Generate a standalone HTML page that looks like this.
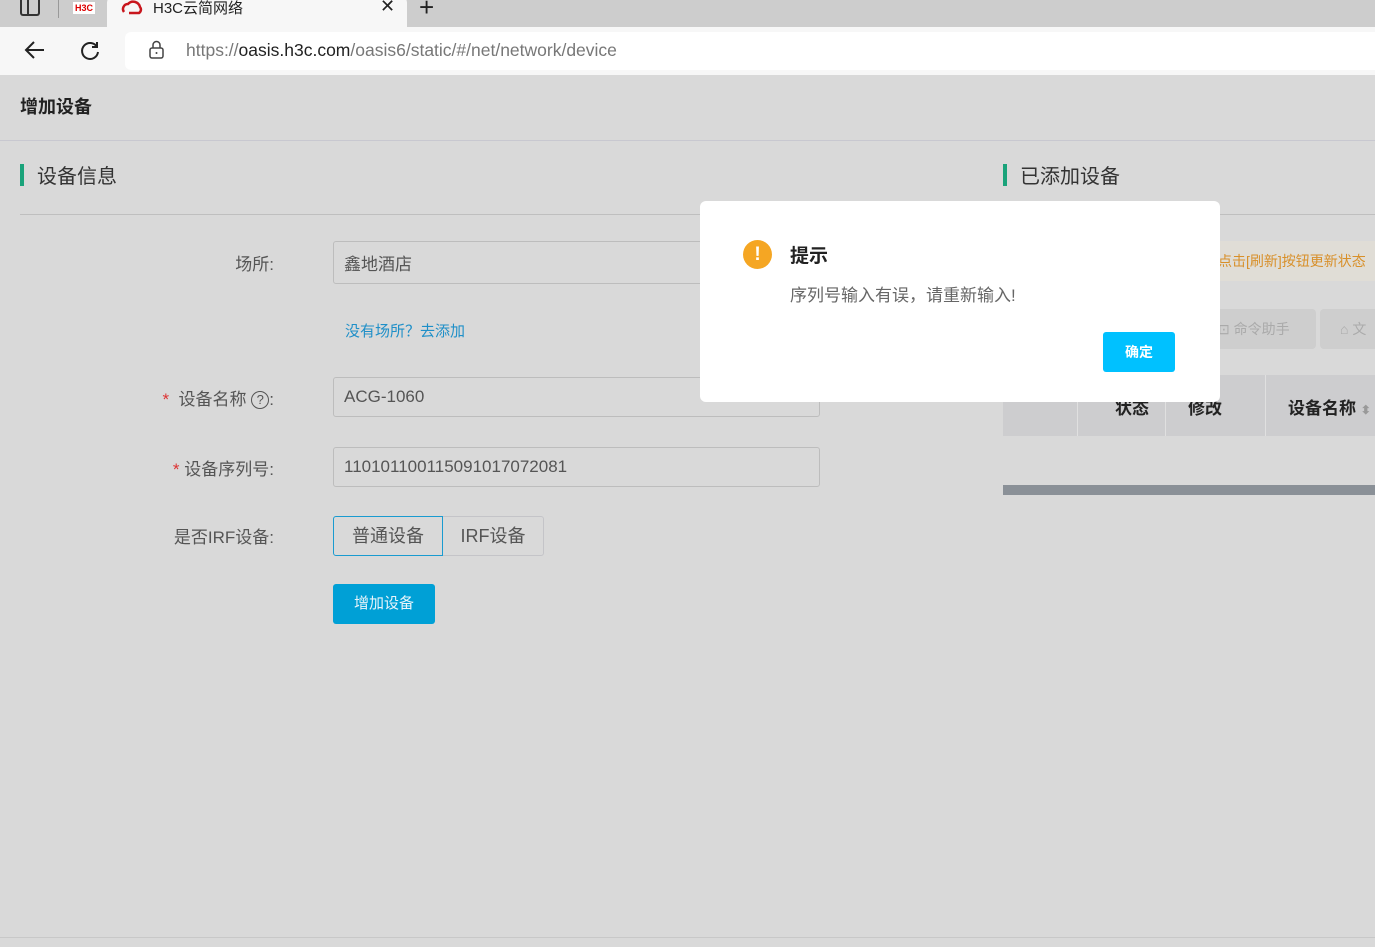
<!DOCTYPE html>
<html><head><meta charset="utf-8"><style>
*{box-sizing:border-box;margin:0;padding:0}
body{width:1375px;height:947px;overflow:hidden;background:#d9d9d9;font-family:"Liberation Sans","Noto Sans CJK SC",sans-serif;position:relative;color:#555}
.a{position:absolute}
.tabbar{left:0;top:0;width:1375px;height:27px;background:#cdcdcd}
.tab{left:107px;top:-5px;width:300px;height:32px;background:#f7f7f7;border-radius:8px 8px 0 0}
.addr{left:0;top:27px;width:1375px;height:48px;background:#f7f7f7}
.url{left:125px;top:32px;width:1260px;height:38px;background:#fff;border-radius:6px}
.inp{border:1px solid #bdbdbd;border-radius:3px;background:#d9d9d9;font-size:17px;color:#555;padding-left:10px;display:flex;align-items:center}
.lbl{font-size:17px;color:#555;text-align:right;width:200px}
</style></head><body>
<div class="a tabbar"></div>
<div class="a tab"></div>
<div class="a" style="left:20px;top:0;width:20px;height:16px;border:2px solid #333;border-top:none;border-radius:0 0 3px 3px"></div>
<div class="a" style="left:27px;top:0;width:2px;height:14px;background:#333"></div>
<div class="a" style="left:58px;top:0;width:1px;height:18px;background:#999"></div>
<div class="a" style="left:73px;top:2px;width:22px;height:12px;background:#fff;color:#d00;font-size:9px;font-weight:bold;line-height:12px;text-align:center">H3C</div>
<svg class="a" style="left:120px;top:0" width="24" height="16"><path d="M4 12 A5 5 0 0 1 8 4 A7 7 0 0 1 20 7 A4 4 0 0 1 19 13 H9" fill="none" stroke="#c8161d" stroke-width="2.5"/></svg>
<div class="a" style="left:153px;top:-3px;font-size:15px;color:#222">H3C云简网络</div>
<div class="a" style="left:380px;top:-4px;font-size:18px;color:#222">✕</div>
<div class="a" style="left:419px;top:-8px;font-size:26px;color:#222;font-weight:300">+</div>
<div class="a addr"></div>
<div class="a url"></div>
<svg class="a" style="left:22px;top:39px" width="26" height="22"><path d="M22 11H4M12 3 4 11l8 8" fill="none" stroke="#222" stroke-width="2"/></svg>
<svg class="a" style="left:78px;top:39px" width="24" height="24"><path d="M19 8A8 8 0 1 0 20 13M19 3v5h-5" fill="none" stroke="#222" stroke-width="2"/></svg>
<svg class="a" style="left:148px;top:40px" width="18" height="20"><rect x="2" y="8" width="13" height="10" rx="2" fill="none" stroke="#444" stroke-width="1.5"/><path d="M5 8V5a3.5 3.5 0 0 1 7 0v3" fill="none" stroke="#444" stroke-width="1.5"/><circle cx="8.5" cy="13" r="1" fill="#444"/></svg>
<div class="a" style="left:186px;top:40px;font-size:17.5px;color:#777">https://<span style="color:#222">oasis.h3c.com</span>/oasis6/static/#/net/network/device</div>

<div class="a" style="left:20px;top:93px;font-size:18px;font-weight:bold;color:#222">增加设备</div>
<div class="a" style="left:0;top:140px;width:1375px;height:1px;background:#c8c8d0"></div>
<div class="a" style="left:20px;top:164px;width:4px;height:22px;background:#1aa37a"></div>
<div class="a" style="left:37px;top:160px;font-size:20px;color:#333">设备信息</div>
<div class="a" style="left:20px;top:214px;width:700px;height:1px;background:#bfbfbf"></div>
<div class="a" style="left:1003px;top:164px;width:4px;height:22px;background:#1aa37a"></div>
<div class="a" style="left:1020px;top:160px;font-size:20px;color:#333">已添加设备</div>
<div class="a" style="left:1220px;top:214px;width:155px;height:1px;background:#bfbfbf"></div>

<div class="a lbl" style="left:74px;top:250px">场所:</div>
<div class="a inp" style="left:333px;top:241px;width:400px;height:43px">鑫地酒店</div>
<div class="a" style="left:345px;top:320px;font-size:15px;color:#1e8fc8">没有场所？去添加</div>
<div class="a lbl" style="left:74px;top:385px"><span style="color:#d33">*</span> &nbsp;设备名称 <span style="display:inline-block;width:18px;height:18px;border:1.5px solid #555;border-radius:50%;font-size:13px;line-height:15px;text-align:center;vertical-align:1px">?</span>:</div>
<div class="a inp" style="left:333px;top:377px;width:487px;height:40px">ACG-1060</div>
<div class="a lbl" style="left:74px;top:455px"><span style="color:#d33">*</span> 设备序列号:</div>
<div class="a inp" style="left:333px;top:447px;width:487px;height:40px">110101100115091017072081</div>
<div class="a lbl" style="left:74px;top:523px">是否IRF设备:</div>
<div class="a" style="left:333px;top:516px;width:110px;height:40px;border:1px solid #1a9bd0;border-radius:3px 0 0 3px;font-size:18px;text-align:center;line-height:38px">普通设备</div>
<div class="a" style="left:443px;top:516px;width:101px;height:40px;border:1px solid #c4c4c8;border-left:none;border-radius:0 3px 3px 0;font-size:18px;text-align:center;line-height:38px">IRF设备</div>
<div class="a" style="left:333px;top:584px;width:102px;height:40px;background:#00a0d6;border-radius:3px;color:#e8f4fa;font-size:15px;text-align:center;line-height:40px">增加设备</div>

<div class="a" style="left:1200px;top:241px;width:175px;height:40px;background:#e0ddd6"></div>
<div class="a" style="left:1218px;top:251px;font-size:14px;color:#d8902a">点击[刷新]按钮更新状态</div>
<div class="a" style="left:1200px;top:309px;width:116px;height:40px;background:#cecece;border-radius:4px;color:#aaa;font-size:14px;line-height:40px;padding-left:18px">⊡ 命令助手</div>
<div class="a" style="left:1320px;top:309px;width:60px;height:40px;background:#cecece;border-radius:4px;color:#aaa;font-size:14px;line-height:40px;padding-left:20px">⌂ 文</div>
<div class="a" style="left:1003px;top:375px;width:372px;height:61px;background:#cdcdcf"></div>
<div class="a" style="left:1077px;top:375px;width:1px;height:61px;background:#e0e0e0"></div>
<div class="a" style="left:1165px;top:375px;width:1px;height:61px;background:#e0e0e0"></div>
<div class="a" style="left:1265px;top:375px;width:1px;height:61px;background:#e0e0e0"></div>
<div class="a" style="left:1115px;top:394px;font-size:17px;font-weight:bold;color:#222">状态</div>
<div class="a" style="left:1188px;top:394px;font-size:17px;font-weight:bold;color:#222">修改</div>
<div class="a" style="left:1288px;top:394px;font-size:17px;font-weight:bold;color:#222">设备名称 <span style="color:#999;font-size:12px">⬍</span></div>
<div class="a" style="left:1003px;top:485px;width:372px;height:10px;background:#8a9097"></div>
<div class="a" style="left:0;top:937px;width:1375px;height:1px;background:#c8c8c8"></div>

<div class="a" style="left:700px;top:201px;width:520px;height:201px;background:#fff;border-radius:6px"></div>
<div class="a" style="left:743px;top:240px;width:29px;height:29px;border-radius:50%;background:#f5a623;color:#fff;font-weight:bold;font-size:19px;text-align:center;line-height:29px">!</div>
<div class="a" style="left:790px;top:241px;font-size:19px;font-weight:bold;color:#222">提示</div>
<div class="a" style="left:790px;top:281px;font-size:17px;color:#666">序列号输入有误，请重新输入!</div>
<div class="a" style="left:1103px;top:332px;width:72px;height:40px;background:#00c1ff;border-radius:3px;color:#fff;font-size:14px;font-weight:bold;text-align:center;line-height:40px">确定</div>
</body></html>
